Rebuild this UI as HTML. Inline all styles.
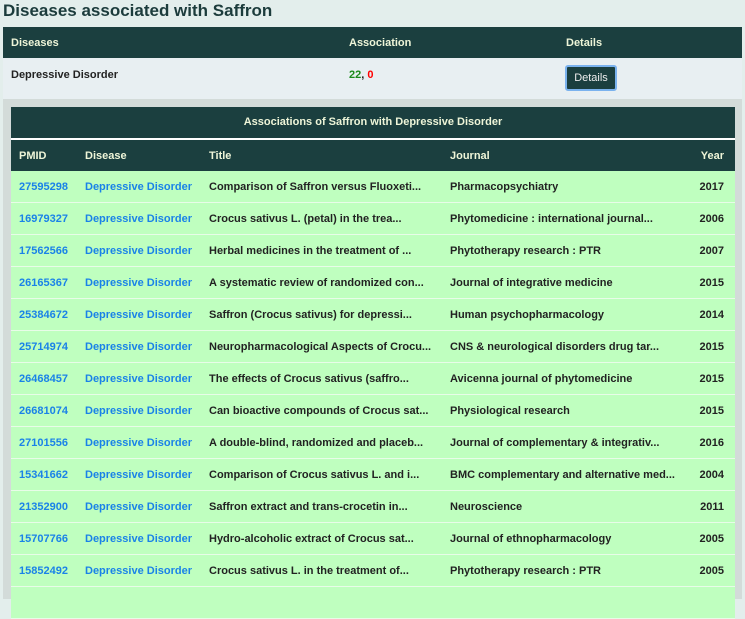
<!DOCTYPE html><html><head><style>
body{margin:0;background:#e3eeec;font-family:"Liberation Sans",sans-serif;width:745px;height:597px;overflow:hidden;position:relative}
h1{margin:0;position:absolute;left:3px;top:1px;font-size:17px;color:#1c3c3c;font-weight:bold}
.top{position:absolute;left:3px;top:27px;width:739px}
.th{background:#1b3f3f;height:31px;color:#eef5d8;font-size:11px;font-weight:bold;position:relative}
.th span,.tr span{position:absolute;top:10px}
.tr{background:#e8eff2;height:41px;position:relative;font-size:11px;font-weight:bold;color:#222}
.tr span{top:11px}
.btn{position:absolute;left:562px;top:7px;width:48px;height:22px;background:#1b3f3f;color:#eee;border:2px solid #7ab2ee;border-radius:3px;font-size:11px;text-align:center;line-height:22px;font-weight:normal}
.panel{position:absolute;left:3px;top:99px;width:739px;height:500px;background:#d3dbd9}
.inner{position:absolute;left:8px;top:8px;width:724px}
.cap{background:#1b3f3f;height:31px;line-height:31px;color:#eef5d8;font-size:11px;font-weight:bold;text-align:center;border-bottom:2px solid #fff}
.hd{background:#1b3f3f;height:31px;position:relative;color:#eef5d8;font-size:11px;font-weight:bold}
.row{background:#bfffbf;height:31px;border-bottom:1px solid #e8fce8;position:relative;font-size:11px;font-weight:bold;color:#222}
.hd span,.row span{position:absolute;top:10px}
.row span{top:10px}
.a{color:#1a82e8}
.c1{left:8px}.c2{left:74px}.c3{left:198px}.c4{left:439px}.c5{right:11px}
</style></head><body>
<h1>Diseases associated with Saffron</h1>
<div class="top">
<div class="th"><span style="left:8px">Diseases</span><span style="left:346px">Association</span><span style="left:563px">Details</span></div>
<div class="tr"><span style="left:8px">Depressive Disorder</span><span style="left:346px"><b style="color:#1a8a1a">22</b>, <b style="color:#f00">0</b></span><div class="btn">Details</div></div>
</div>
<div class="panel"><div class="inner">
<div class="cap">Associations of Saffron with Depressive Disorder</div>
<div class="hd"><span class="c1">PMID</span><span class="c2">Disease</span><span class="c3">Title</span><span class="c4">Journal</span><span class="c5">Year</span></div>
<div class="row"><span class="c1 a">27595298</span><span class="c2 a">Depressive Disorder</span><span class="c3">Comparison of Saffron versus Fluoxeti...</span><span class="c4">Pharmacopsychiatry</span><span class="c5">2017</span></div>
<div class="row"><span class="c1 a">16979327</span><span class="c2 a">Depressive Disorder</span><span class="c3">Crocus sativus L. (petal) in the trea...</span><span class="c4">Phytomedicine : international journal...</span><span class="c5">2006</span></div>
<div class="row"><span class="c1 a">17562566</span><span class="c2 a">Depressive Disorder</span><span class="c3">Herbal medicines in the treatment of ...</span><span class="c4">Phytotherapy research : PTR</span><span class="c5">2007</span></div>
<div class="row"><span class="c1 a">26165367</span><span class="c2 a">Depressive Disorder</span><span class="c3">A systematic review of randomized con...</span><span class="c4">Journal of integrative medicine</span><span class="c5">2015</span></div>
<div class="row"><span class="c1 a">25384672</span><span class="c2 a">Depressive Disorder</span><span class="c3">Saffron (Crocus sativus) for depressi...</span><span class="c4">Human psychopharmacology</span><span class="c5">2014</span></div>
<div class="row"><span class="c1 a">25714974</span><span class="c2 a">Depressive Disorder</span><span class="c3">Neuropharmacological Aspects of Crocu...</span><span class="c4">CNS &amp; neurological disorders drug tar...</span><span class="c5">2015</span></div>
<div class="row"><span class="c1 a">26468457</span><span class="c2 a">Depressive Disorder</span><span class="c3">The effects of Crocus sativus (saffro...</span><span class="c4">Avicenna journal of phytomedicine</span><span class="c5">2015</span></div>
<div class="row"><span class="c1 a">26681074</span><span class="c2 a">Depressive Disorder</span><span class="c3">Can bioactive compounds of Crocus sat...</span><span class="c4">Physiological research</span><span class="c5">2015</span></div>
<div class="row"><span class="c1 a">27101556</span><span class="c2 a">Depressive Disorder</span><span class="c3">A double-blind, randomized and placeb...</span><span class="c4">Journal of complementary &amp; integrativ...</span><span class="c5">2016</span></div>
<div class="row"><span class="c1 a">15341662</span><span class="c2 a">Depressive Disorder</span><span class="c3">Comparison of Crocus sativus L. and i...</span><span class="c4">BMC complementary and alternative med...</span><span class="c5">2004</span></div>
<div class="row"><span class="c1 a">21352900</span><span class="c2 a">Depressive Disorder</span><span class="c3">Saffron extract and trans-crocetin in...</span><span class="c4">Neuroscience</span><span class="c5">2011</span></div>
<div class="row"><span class="c1 a">15707766</span><span class="c2 a">Depressive Disorder</span><span class="c3">Hydro-alcoholic extract of Crocus sat...</span><span class="c4">Journal of ethnopharmacology</span><span class="c5">2005</span></div>
<div class="row"><span class="c1 a">15852492</span><span class="c2 a">Depressive Disorder</span><span class="c3">Crocus sativus L. in the treatment of...</span><span class="c4">Phytotherapy research : PTR</span><span class="c5">2005</span></div>
<div class="row"></div>
</div></div>
</body></html>
